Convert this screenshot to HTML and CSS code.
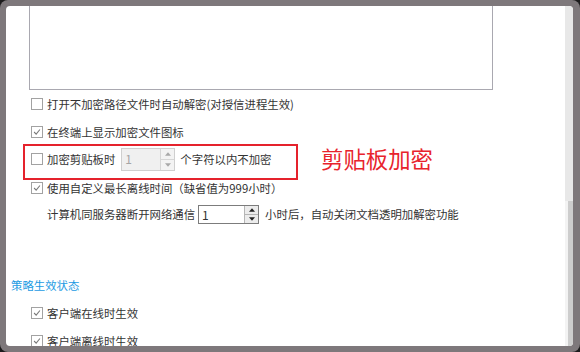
FILE: index.html
```html
<!DOCTYPE html>
<html lang="zh-CN">
<head>
	<meta charset="UTF-8">
	<title>策略设置</title>
	<link rel="stylesheet" href="styles.css">
</head>
<body>
<div class="window">
    <div class="panel">
        <div class="content">
            <div class="memo"></div>

            <div class="row"><span class="cb"></span><span>打开不加密路径文件时自动解密(对授信进程生效)</span></div>
            <div class="row"><span class="cb"><svg viewBox="0 0 12 12"><polyline points="2.5,6 5,8.5 9.5,3"/></svg></span><span>在终端上显示加密文件图标</span></div>

            <div class="clip-row">
                <div class="mark-box">
                    <div class="row">
                        <span class="cb"></span><span>加密剪贴板时</span>
                        <span class="spin off">
                            <span class="spin-val">1</span>
                            <span class="spin-btns">
                                <span class="up"><svg viewBox="0 0 7 4"><polygon points="0,4 3.5,0 7,4"/></svg></span>
                                <span class="down"><svg viewBox="0 0 7 4"><polygon points="0,0 7,0 3.5,4"/></svg></span>
                            </span>
                        </span>
                        <span>个字符以内不加密</span>
                    </div>
                </div>
                <span class="mark-text">剪贴板加密</span>
            </div>

            <div class="row"><span class="cb"><svg viewBox="0 0 12 12"><polyline points="2.5,6 5,8.5 9.5,3"/></svg></span><span>使用自定义最长离线时间（缺省值为999小时）</span></div>
            <div class="row sub">
                <span>计算机同服务器断开网络通信</span>
                <span class="spin">
                    <span class="spin-val">1</span>
                    <span class="spin-btns">
                        <span class="up"><svg viewBox="0 0 7 4"><polygon points="0,4 3.5,0 7,4"/></svg></span>
                        <span class="down"><svg viewBox="0 0 7 4"><polygon points="0,0 7,0 3.5,4"/></svg></span>
                    </span>
                </span>
                <span>小时后，自动关闭文档透明加解密功能</span>
            </div>

            <div class="section">策略生效状态</div>
            <div class="row"><span class="cb"><svg viewBox="0 0 12 12"><polyline points="2.5,6 5,8.5 9.5,3"/></svg></span><span>客户端在线时生效</span></div>
            <div class="row"><span class="cb"><svg viewBox="0 0 12 12"><polyline points="2.5,6 5,8.5 9.5,3"/></svg></span><span>客户端离线时生效</span></div>
        </div>
        <div class="scrollbar"><div class="thumb"></div></div>
    </div>
</div>
</body>
</html>
```

FILE: styles.css
```css
body,html{
    padding: 0;
    margin: 0;
    background: #1c1b1c;
    font-family: "Noto Sans CJK SC", "Microsoft YaHei", sans-serif;
    font-size: 11.4px;
    color: #333333;
}
.window{
    width: 580px;
    height: 352px;
    box-sizing: border-box;
    padding: 6px 7px 6px 6px;
    background: #7e787b;
    border-radius: 8px;
}
.panel{
    display: flex;
    height: 340px;
    background: #ffffff;
    border-radius: 4px;
    overflow: hidden;
}
.content{
    flex: 1;
    overflow: hidden;
}
.memo{
    width: 464px;
    height: 84px;
    box-sizing: border-box;
    margin-left: 23px;
    border: 1px solid #a9a8b0;
    border-top: none;
}
.row{
    display: flex;
    align-items: center;
    height: 28px;
    padding-left: 25px;
    white-space: nowrap;
}
.cb{
    width: 12px;
    height: 12px;
    box-sizing: border-box;
    border: 1px solid #a2a2a2;
    margin-right: 4px;
    flex: none;
}
.cb svg{
    display: block;
    width: 10px;
    height: 10px;
    fill: none;
    stroke: #7a7a7a;
    stroke-width: 1.3;
}
.clip-row{
    display: flex;
    align-items: center;
    height: 36px;
    margin: -2px 0 -6px 0;
}
.mark-box{
    width: 275px;
    height: 36px;
    box-sizing: border-box;
    margin-left: 17px;
    border: 2px solid #e5222c;
}
.mark-box .row{
    height: 26px;
    padding-left: 6px;
}
.mark-text{
    margin: 0 0 8px 23px;
    font-size: 22.4px;
    color: #e8232c;
    white-space: nowrap;
}
.spin{
    display: flex;
    width: 61px;
    height: 19px;
    box-sizing: border-box;
    margin: 0 6px 0 3px;
    border: 1px solid #7c7c7c;
    background: #ffffff;
}
.spin.off{
    width: 54px;
    height: 23px;
    margin: 0 5px 0 6px;
    border-color: #cfcfcf;
    background: #f0f0f0;
    color: #a5a5a5;
}
.spin-val{
    flex: 1;
    padding-left: 3px;
    line-height: 17px;
    font-size: 12px;
}
.spin.off .spin-val{
    line-height: 20px;
}
.spin-btns{
    display: flex;
    flex-direction: column;
    width: 13px;
    border-left: 1px solid #b5b5b5;
    background: #ececec;
}
.spin.off .spin-btns{
    border-left-color: #d6d6d6;
    background: #f3f3f3;
}
.spin-btns span{
    flex: 1;
    display: flex;
    align-items: center;
    justify-content: center;
}
.spin-btns .up{
    border-bottom: 1px solid #b5b5b5;
}
.spin.off .spin-btns .up{
    border-bottom-color: #d6d6d6;
}
.spin-btns svg{
    width: 6px;
    height: 4px;
    fill: #222222;
}
.spin.off .spin-btns svg{
    fill: #a8a8a8;
}
.sub{
    height: 24px;
    padding-left: 41px;
}
.section{
    height: 24px;
    line-height: 24px;
    margin-top: 47px;
    padding-left: 5px;
    color: #1d9be3;
}
.section + .row{
    margin-top: 2px;
}
.scrollbar{
    display: flex;
    flex-direction: column;
    width: 8px;
    background: #e8e8e8;
}
.thumb{
    flex: 1;
    margin-top: 195px;
    border-left: 3px solid #f3f3f3;
    background: #cdcdcd;
}
```
